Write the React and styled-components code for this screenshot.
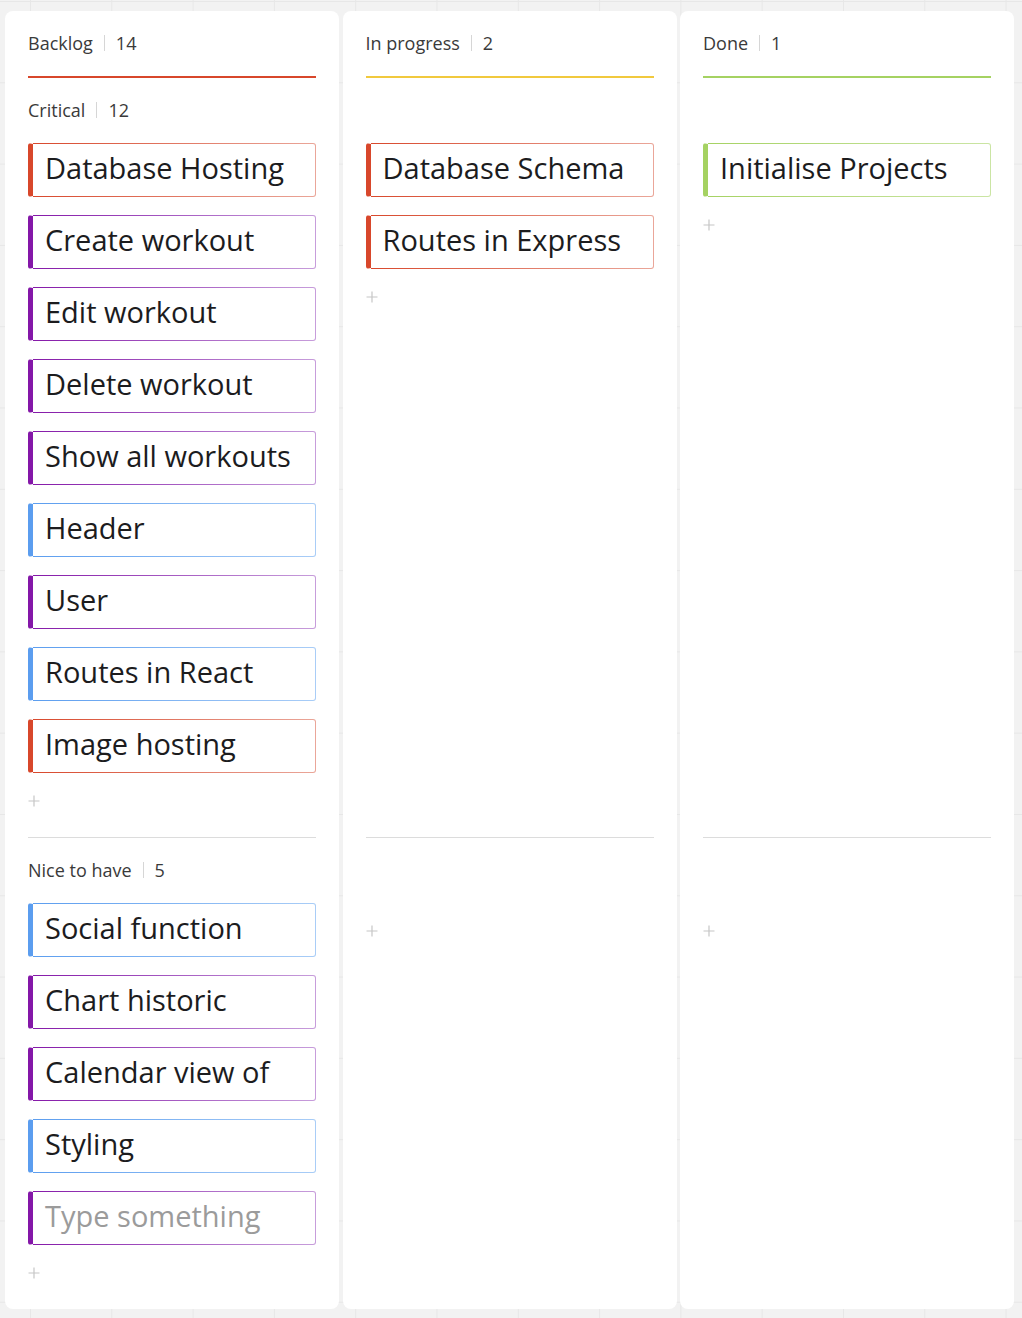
import React from "react";
import styled, { createGlobalStyle } from "styled-components";

const GlobalStyle = createGlobalStyle`
    html, body {
        margin: 0;
        padding: 0;
    }

    body {
        font-family: "Open Sans", "Noto Sans", sans-serif;
        background-color: #f2f2f2;
        background-image:
            linear-gradient(to right, #e7e7e7 1px, transparent 1px),
            linear-gradient(to bottom, #e7e7e7 1px, transparent 1px);
        background-size: 81.3px 81.3px;
        background-position: 30px 1px;
    }
`;

const accents = {
    red: { main: "#d8472b", light: "#eaa699" },
    yellow: { main: "#f1c93d", light: "#f6dc85" },
    green: { main: "#a5d262", light: "#cbe5a4" },
    purple: { main: "#8417a8", light: "#c79ddb" },
    blue: { main: "#5b9def", light: "#a9cdf7" },
};

const Board = styled.div`
    display: grid;
    grid-template-columns: 334px 334px 334px;
    grid-template-rows: auto auto auto;
    column-gap: 3.5px;
    padding: 11px 8px 10px 5px;
    min-height: 1297px;
    box-sizing: border-box;
`;

const Column = styled.section`
    grid-row: 1 / -1;
    display: grid;
    grid-template-rows: subgrid;
    align-content: start;
    background: #ffffff;
    border-radius: 8px;
    padding: 0 23px 24px 23px;
`;

const ColumnHeader = styled.header`
    display: flex;
    align-items: center;
    height: 24px;
    padding: 20px 0 21px 0;
    border-bottom: 2px solid ${(p) => accents[p.$accent].main};
`;

const Title = styled.span`
    font-size: 18px;
    line-height: 24px;
    color: #3a3a3a;
`;

const Count = styled.span`
    font-size: 18px;
    line-height: 24px;
    color: #3a3a3a;
    padding-left: 11px;
    margin-left: 11px;
    border-left: 1px solid #d6d6d6;
    height: 16px;
    display: flex;
    align-items: center;
`;

const Lane = styled.div`
    display: flex;
    flex-direction: column;
    padding-top: 20px;
    border-bottom: ${(p) => (p.$divided ? "1px solid #dcdcdc" : "none")};
    padding-bottom: ${(p) => (p.$divided ? "24px" : "0")};
`;

const LaneLabel = styled.div`
    display: flex;
    align-items: center;
    height: 24px;
    margin-bottom: 21px;
`;

const Cards = styled.div`
    display: flex;
    flex-direction: column;
    gap: 18px;
`;

const Card = styled.div`
    box-sizing: border-box;
    height: 54px;
    display: flex;
    align-items: center;
    padding: 0 0 6px 12px;
    border: 1px solid transparent;
    border-left: 5px solid ${(p) => accents[p.$accent].main};
    border-radius: 3px;
    background:
        linear-gradient(#ffffff, #ffffff) padding-box,
        linear-gradient(
                90deg,
                ${(p) => accents[p.$accent].main},
                ${(p) => accents[p.$accent].light}
            )
            border-box;
    font-size: 29px;
    color: ${(p) => (p.$placeholder ? "#9b9b9b" : "#1c1c1e")};
    white-space: nowrap;
    overflow: hidden;
`;

const AddButton = styled.div`
    height: 24px;
    margin-top: 16px;
    display: flex;
    align-items: center;
`;

function Plus() {
    return (
        <svg width="12" height="12" viewBox="0 0 12 12">
            <path d="M6 0.5V11.5M0.5 6H11.5" stroke="#c6c6c6" strokeWidth="1.2" />
        </svg>
    );
}

const columns = [
    {
        title: "Backlog",
        count: 14,
        accent: "red",
        lanes: [
            {
                label: "Critical",
                count: 12,
                cards: [
                    ["Database Hosting", "red"],
                    ["Create workout", "purple"],
                    ["Edit workout", "purple"],
                    ["Delete workout", "purple"],
                    ["Show all workouts", "purple"],
                    ["Header", "blue"],
                    ["User", "purple"],
                    ["Routes in React", "blue"],
                    ["Image hosting", "red"],
                ],
            },
            {
                label: "Nice to have",
                count: 5,
                cards: [
                    ["Social function", "blue"],
                    ["Chart historic", "purple"],
                    ["Calendar view of", "purple"],
                    ["Styling", "blue"],
                    ["Type something", "purple", true],
                ],
            },
        ],
    },
    {
        title: "In progress",
        count: 2,
        accent: "yellow",
        lanes: [
            {
                cards: [
                    ["Database Schema", "red"],
                    ["Routes in Express", "red"],
                ],
            },
            { cards: [] },
        ],
    },
    {
        title: "Done",
        count: 1,
        accent: "green",
        lanes: [{ cards: [["Initialise Projects", "green"]] }, { cards: [] }],
    },
];

function App() {
    return (
        <>
            <GlobalStyle />
            <Board>
                {columns.map((col) => (
                    <Column key={col.title}>
                        <ColumnHeader $accent={col.accent}>
                            <Title>{col.title}</Title>
                            <Count>{col.count}</Count>
                        </ColumnHeader>
                        {col.lanes.map((lane, i) => (
                            <Lane key={i} $divided={i === 0}>
                                <LaneLabel>
                                    {lane.label && (
                                        <>
                                            <Title>{lane.label}</Title>
                                            <Count>{lane.count}</Count>
                                        </>
                                    )}
                                </LaneLabel>
                                <Cards>
                                    {lane.cards.map(([text, accent, placeholder]) => (
                                        <Card
                                            key={text}
                                            $accent={accent}
                                            $placeholder={placeholder}
                                        >
                                            {text}
                                        </Card>
                                    ))}
                                </Cards>
                                <AddButton>
                                    <Plus />
                                </AddButton>
                            </Lane>
                        ))}
                    </Column>
                ))}
            </Board>
        </>
    );
}

export default App;
